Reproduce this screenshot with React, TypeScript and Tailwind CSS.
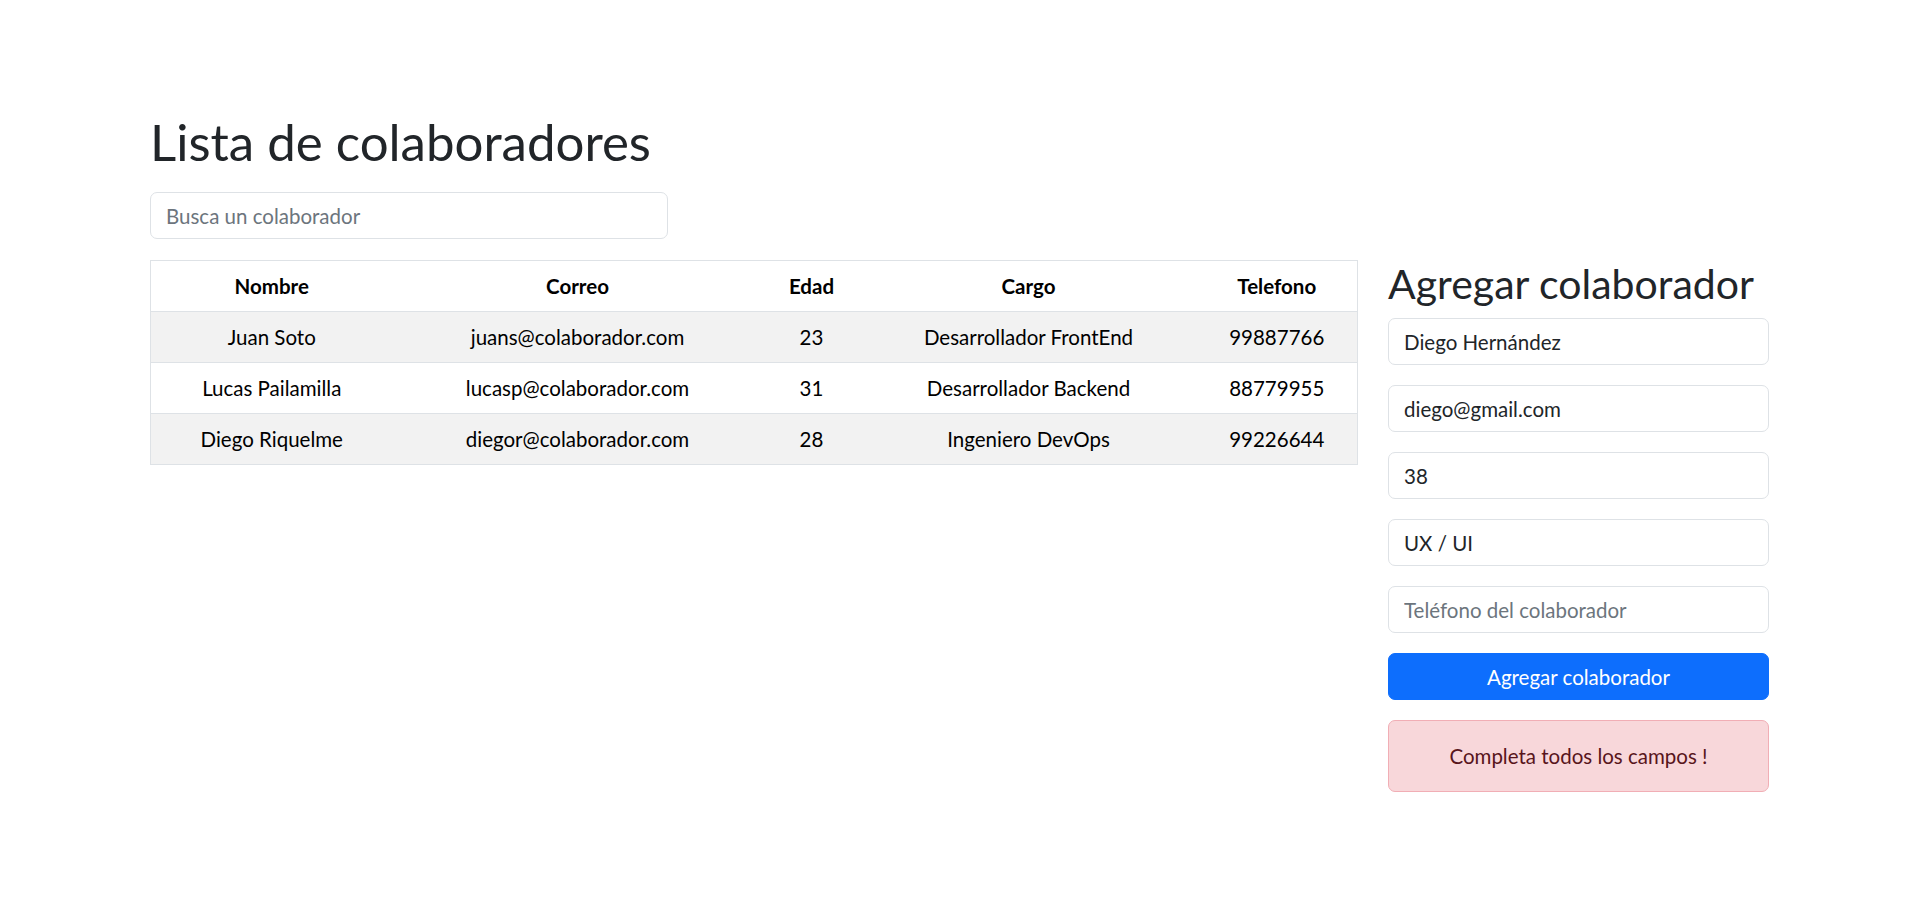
import React from "react";

const rows = [
  { nombre: "Juan Soto", correo: "juans@colaborador.com", edad: "23", cargo: "Desarrollador FrontEnd", tel: "99887766" },
  { nombre: "Lucas Pailamilla", correo: "lucasp@colaborador.com", edad: "31", cargo: "Desarrollador Backend", tel: "88779955" },
  { nombre: "Diego Riquelme", correo: "diegor@colaborador.com", edad: "28", cargo: "Ingeniero DevOps", tel: "99226644" },
];

const inputCls =
  "block h-[47px] w-full rounded-[7px] border border-[#dee2e6] bg-white px-[15px] text-[20.5px] leading-[30px] text-[#212529] outline-none placeholder:text-[#6c757d]";

export default function App() {
  return (
    <div
      className="min-h-screen w-full bg-white pt-[112px] pl-[150px] text-[#212529]"
      style={{ fontFamily: 'Lato, "Open Sans", sans-serif' }}
    >
      <h1 className="mb-[20px] text-[51px] font-normal leading-[60px] text-[#212529]">Lista de colaboradores</h1>
      <input
        type="text"
        placeholder="Busca un colaborador"
        className="block h-[47px] w-[518px] rounded-[7px] border border-[#dee2e6] bg-white px-[15px] text-[20.5px] leading-[30px] text-[#212529] outline-none placeholder:text-[#6c757d]"
      />
      <div className="mt-[21px] flex items-start">
        <div className="w-[1207px]">
          <table className="w-full table-fixed border-collapse border border-[#dee2e6] text-[20.5px] leading-[30px] text-black">
            <colgroup>
              <col className="w-[242px]" />
              <col className="w-[370px]" />
              <col className="w-[98px]" />
              <col className="w-[336px]" />
              <col className="w-[161px]" />
            </colgroup>
            <thead>
              <tr className="border-b border-[#dee2e6]">
                <th className="px-[10px] py-[10px] text-center font-bold">Nombre</th>
                <th className="px-[10px] py-[10px] text-center font-bold">Correo</th>
                <th className="px-[10px] py-[10px] text-center font-bold">Edad</th>
                <th className="px-[10px] py-[10px] text-center font-bold">Cargo</th>
                <th className="px-[10px] py-[10px] text-center font-bold">Telefono</th>
              </tr>
            </thead>
            <tbody>
              {rows.map((r, i) => (
                <tr key={r.correo} className={`border-b border-[#dee2e6] ${i % 2 === 0 ? "bg-[#f2f2f2]" : "bg-white"}`}>
                  <td className="px-[10px] py-[10px] text-center">{r.nombre}</td>
                  <td className="px-[10px] py-[10px] text-center">{r.correo}</td>
                  <td className="px-[10px] py-[10px] text-center">{r.edad}</td>
                  <td className="px-[10px] py-[10px] text-center">{r.cargo}</td>
                  <td className="px-[10px] py-[10px] text-center">{r.tel}</td>
                </tr>
              ))}
            </tbody>
          </table>
        </div>
        <div className="ml-[31px] w-[381px]">
          <h2 className="mb-[10px] whitespace-nowrap text-[41px] font-normal leading-[48px] text-[#212529]">Agregar colaborador</h2>
          <div className="flex flex-col gap-[20px]">
            <input type="text" defaultValue="Diego Hernández" className={inputCls} />
            <input type="text" defaultValue="diego@gmail.com" className={inputCls} />
            <input type="text" defaultValue="38" className={inputCls} />
            <input type="text" defaultValue="UX / UI" className={inputCls} />
            <input type="text" placeholder="Teléfono del colaborador" className={inputCls} />
            <button
              type="button"
              className="h-[47px] w-full rounded-[7px] border border-[#0d6efd] bg-[#0d6efd] text-[20.5px] leading-[30px] text-white"
            >
              Agregar colaborador
            </button>
            <div className="flex h-[72px] w-full items-center justify-center rounded-[7px] border border-[#f1aeb5] bg-[#f8d7da] text-[20.5px] leading-[30px] text-[#58151c]">
              Completa todos los campos !
            </div>
          </div>
        </div>
      </div>
    </div>
  );
}
